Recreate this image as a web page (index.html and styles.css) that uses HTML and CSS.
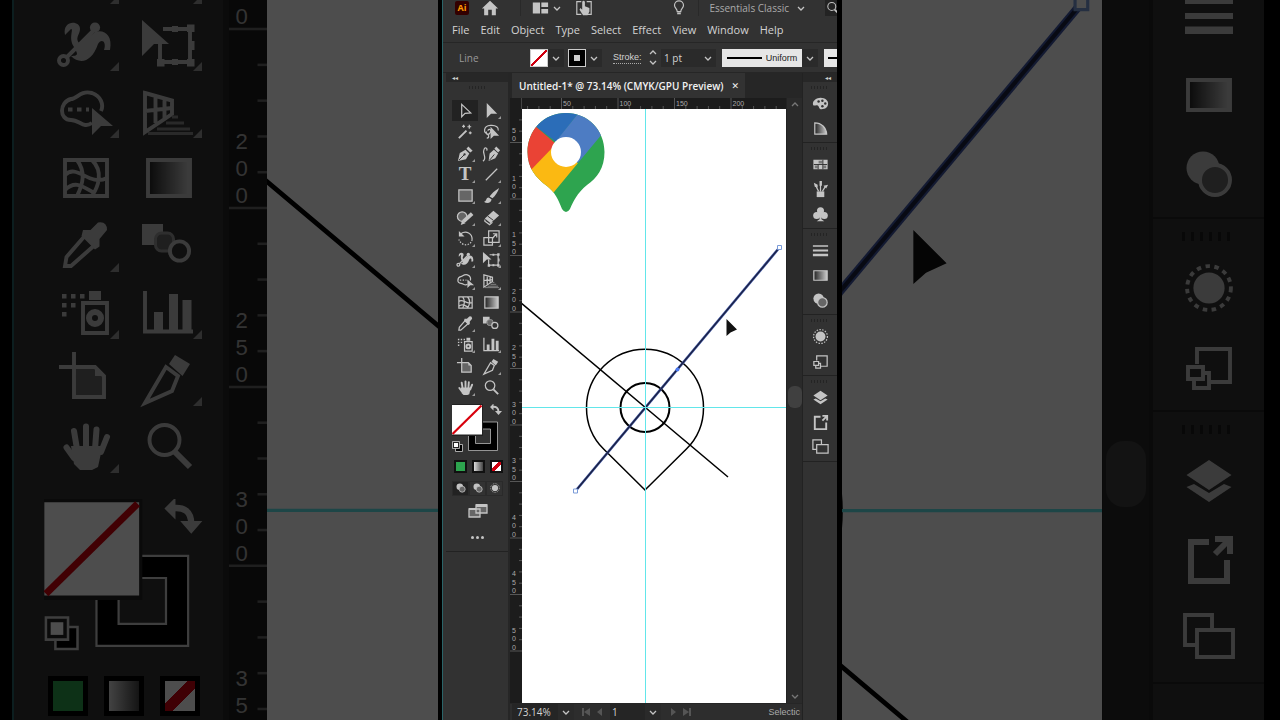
FILE: index.html
```
<!DOCTYPE html>
<html lang="en">
<head>
    <meta charset="UTF-8">
    <meta name="viewport" content="width=device-width, initial-scale=1.0">
    <title>Untitled-1</title>
    <link rel="stylesheet" href="styles.css">
</head>
<body>
    <svg class="sprite" aria-hidden="true">
        <defs>
            <linearGradient id="fade"><stop offset="0" stop-color="#222"/><stop offset="1" stop-color="#ccc"/></linearGradient>
            <clipPath id="pin-shape">
                <path d="M566 113C588 113 604.500 130 604.500 152C604.500 168 597 178 587 185C577 193 573 202 570 209Q566 215 562 209C559 201 555 192 547 186C536 178 527.500 168 527.500 152C527.500 130 544 113 566 113Z"/>
            </clipPath>
        </defs>

        <!-- tools -->
        <symbol id="select" viewBox="0 0 20 20"><path class="line" d="M6 3.500V16.500L9.500 13L15.500 12.500Z"/></symbol>
        <symbol id="direct" viewBox="0 0 20 20"><path d="M5 2V18L9.500 13.500H16Z"/></symbol>
        <symbol id="wand" viewBox="0 0 20 20"><path class="bold" d="M3 17L11 9"/><path class="line" d="M14 3V7M12 5H16M8 3V6M6.500 4.500H9.500M15 10V13M13.500 11.500H16.500"/></symbol>
        <symbol id="lasso" viewBox="0 0 20 20"><path class="line" d="M7 13C1 12 1 4 9 3.500C15 3 18 6 17 9M6 9C8 6 11 9 8 12C7 14 3 13 5 10M6 13C8 15 7 17 5 17"/><path d="M9 5V18L12.500 14.500H18Z"/></symbol>
        <symbol id="pen" viewBox="0 0 20 20"><path d="M2 18L4 9.500L10 6L14 10L10.500 16Z"/><path d="M11 5L13 2.500L17.500 7L15 9Z"/><path class="cut" d="M3 17L8.500 11.500"/><circle class="hole" cx="9" cy="11" r="1.200"/></symbol>
        <symbol id="curve" viewBox="0 0 20 20"><path d="M7 18L8 10L12.500 6L17 10L14 15Z"/><path d="M13 5L15 2.500L19 6.500L17 9Z"/><path class="cut" d="M8 17L13 11"/><path class="line" d="M1 18C6 15 0 10 2 6C3 3 6 4 5 7"/></symbol>
        <symbol id="segment" viewBox="0 0 20 20"><path class="line" d="M4 16L16 4"/></symbol>
        <symbol id="rect" viewBox="0 0 20 20"><path class="shade line" d="M3 4H17V16H3Z"/></symbol>
        <symbol id="brush" viewBox="0 0 20 20"><path d="M18 2C13 5 10 8 8 11L11 13C14 10 17 6 18 2ZM7 12C4 12 5 16 2 16.500C5 19 10 18 10 14Z"/></symbol>
        <symbol id="shaper" viewBox="0 0 20 20"><circle class="shade line" cx="6.500" cy="9" r="5"/><path class="thick" d="M8 14L17 6"/><path d="M5 18L6.500 12.500L10 16Z"/></symbol>
        <symbol id="eraser" viewBox="0 0 20 20"><path d="M3 11L12 3L18 8L9 16Z"/><path class="line" d="M3 12V14L8 17.500L11 15"/><path class="cut" d="M6 8.500L12 13"/></symbol>
        <symbol id="rotate" viewBox="0 0 20 20"><path class="line" d="M5 5C11 1 17 5 17 11"/><path class="line dots" d="M17 11C16 18 6 19 3 11"/><path d="M3 2V8H9Z"/></symbol>
        <symbol id="scale" viewBox="0 0 20 20"><path class="line" d="M7 2H18V14H7ZM2 9H11V17H2ZM11 10L15 5M11.500 5H15.500V9"/></symbol>
        <symbol id="warp" viewBox="0 0 20 20"><path d="M3 7C2 2 8 2 8 5C8 7 6 8 8 10L13 6C16 5 19 7 18 12H16C17 9 15 8 14 10C12 16 8 17 5 14C8 14 7 13 6 11C4 8 6 5 5 5Z"/><path class="line" d="M3 15L13 5"/><circle class="hole line" cx="2.500" cy="15.500" r="1.500"/><circle cx="13" cy="4.500" r="1.700"/></symbol>
        <symbol id="transform" viewBox="0 0 20 20"><path class="line" d="M8 5H17V16H7V10"/><path d="M1 2V14L5 10H10ZM16 3.500H18.500V6H16ZM16 15H18.500V17.500H16ZM6 15H8.500V17.500H6ZM11 4H13V6H11ZM11 15H13V17H11ZM17 9H18.500V12H17Z"/></symbol>
        <symbol id="builder" viewBox="0 0 20 20"><path class="line" d="M12 14C9 16 8 13 5 13C1 13 1 7 5 6C7 6 8 3 12 4C15 5 16 8 15 10"/><path class="line dots" d="M4 9.500H11"/><path d="M12 9V18L15 15H19Z"/></symbol>
        <symbol id="perspective" viewBox="0 0 20 20"><path class="line" d="M2 4L11 6.500V11L2 17ZM5.500 5V14M8.500 6V12.500M2 10L11 9"/><path class="thin" d="M11 12H13M9 14H15M6 16H17M3 17.500H18"/></symbol>
        <symbol id="mesh" viewBox="0 0 20 20"><path class="line" d="M3 4H17V16H3ZM7 4C10 8 9 12 7 16M12 4C16 8 14 13 12 16M3 9C7 5 11 13 17 10M3 14C7 10 10 14 13 15"/></symbol>
        <symbol id="gradient" viewBox="0 0 20 20"><path class="line" fill="url(#fade)" d="M3 4H17V16H3Z"/></symbol>
        <symbol id="dropper" viewBox="0 0 20 20"><path class="line" d="M10 6.500L3.500 14L3 17H5L13.500 9.500"/><path d="M9 5L11.500 5L14 2.500Q17 2 17 5L14.500 8V10.500L13 11.500L8.500 7Z"/></symbol>
        <symbol id="blend" viewBox="0 0 20 20"><path d="M1 3H8V6L5 8V10H1Z"/><rect class="shade thin-edge" x="5.500" y="6" width="6" height="6" rx="2"/><circle class="hole line" cx="13.500" cy="12" r="3.200"/></symbol>
        <symbol id="spray" viewBox="0 0 20 20"><path class="line" d="M9 7H17V17H9Z"/><circle class="bold" cx="13" cy="12" r="2"/><path d="M11 3H15V6H11ZM2 4H3.500V5.500H2ZM5 4H6.500V5.500H5ZM8 4H9.500V5.500H8ZM2 7H3.500V8.500H2ZM5 7H6.500V8.500H5ZM2 10H3.500V11.500H2Z"/></symbol>
        <symbol id="graph" viewBox="0 0 20 20"><path class="line" d="M2 3V16.500H18"/><path d="M5 10H8V16H5ZM10 4H13V16H10ZM14.500 6H17.500V16H14.500Z"/></symbol>
        <symbol id="artboard" viewBox="0 0 20 20"><path class="shade line" d="M6 6H13L16 9V16H6Z"/><path class="line" d="M1 6H6M6 1V6"/><path d="M13 6V9H16Z"/></symbol>
        <symbol id="slice" viewBox="0 0 20 20"><path class="line" d="M2 18L9 6L13 9L11 14Z"/><path d="M10 5L12 2L17 5L14.500 9Z"/></symbol>
        <symbol id="hand" viewBox="0 0 20 20"><path class="bold" stroke-linecap="round" d="M7 11L6 5M10 10V3.500M13 11L13.500 4.500M15 12L17 7M6 14L3.500 10.500"/><path d="M5 10H15.500L14 17L12 18H8L6 16Z"/></symbol>
        <symbol id="zoom" viewBox="0 0 20 20"><circle class="line" cx="8.500" cy="8" r="5"/><path class="bold" d="M12 12L17 17"/></symbol>
        <symbol id="screen" viewBox="0 0 20 20"><path class="shade line" d="M1 8H12V16H1ZM8 4H19V12H8Z"/><path d="M1 7H8V9H1ZM8 3H19V6H8Z"/></symbol>

        <!-- fill and stroke swatches -->
        <symbol id="fill-stroke" viewBox="452 404 52 50">
            <path d="M468.500 422H497.500V450.500H468.500Z" fill="#000" stroke="#ccc" stroke-width="0.700"/>
            <path d="M475.500 429H490.500V443.500H475.500Z" fill="#323232" stroke="#ccc" stroke-width="0.700"/>
            <path d="M451 404H483V436H451Z" fill="#222"/>
            <path d="M452 405H482V434.500H452Z" fill="#fff"/>
            <path d="M452.500 434L481.500 405.500" stroke="#d8000c" stroke-width="2.200"/>
            <path class="bold" d="M492 407Q498.500 406 498.500 412"/>
            <path d="M490 407L493.500 403.500V410.500ZM495 411H502L498.500 415Z"/>
            <path d="M455.500 444.500H462.500V451.500H455.500Z" fill="#000" stroke="#ccc" stroke-width="0.800"/>
            <path d="M452.500 441.500H459.500V448.500H452.500Z" fill="#222" stroke="#ccc" stroke-width="0.800"/>
            <path d="M454 443H458V447H454Z" fill="#fff"/>
        </symbol>

        <!-- panel icons -->
        <symbol id="palette" viewBox="0 0 20 20"><path d="M10 4C15 4 18 7 18 10C18 14 15 16 11 16C8 16 9 13 7 12C5 11 2 14 2 10C2 7 6 4 10 4Z"/><circle class="hole" cx="8" cy="8" r="1.300"/><circle class="hole" cx="12" cy="7" r="1.300"/><circle class="hole" cx="15" cy="10" r="1.300"/><circle class="hole" cx="12" cy="13" r="1.300"/></symbol>
        <symbol id="fan" viewBox="0 0 20 20"><path fill="url(#fade)" class="line" d="M4 4C11 4 16 9 16.500 16H4Z"/></symbol>
        <symbol id="swatches" viewBox="0 0 20 20"><path d="M2.500 5H17.500V15H2.500Z"/><path fill="#777" d="M8 6H12V9H8ZM4 11H7V14H4ZM13 11H16V14H13Z"/><path class="cut" d="M3 10H17M7.500 10V15M12.500 5V15"/></symbol>
        <symbol id="brushes" viewBox="0 0 20 20"><path d="M6 12H14V18H6Z"/><path class="line" d="M8 12L5 6M10 12V5M12 12L15 7"/><path d="M3 3L7 5L7 8L4 7ZM9 1H11.500V6H9ZM13 6L18 5L16 9Z"/></symbol>
        <symbol id="club" viewBox="0 0 20 20"><circle cx="10" cy="6" r="3.700"/><circle cx="6" cy="11" r="3.700"/><circle cx="14" cy="11" r="3.700"/><path d="M9 8H11L11 15L14 17H6L9 15Z"/></symbol>
        <symbol id="strokes" viewBox="0 0 20 20"><path d="M2 4.500H18V6H2ZM2 9H18V11H2ZM2 13.500H18V16H2Z"/></symbol>
        <symbol id="ramp" viewBox="0 0 20 20"><path fill="url(#fade)" class="line" d="M3 5H17V15H3Z"/></symbol>
        <symbol id="transparency" viewBox="0 0 20 20"><circle cx="8" cy="8" r="5.500"/><circle class="shade line" cx="12" cy="12" r="5"/></symbol>
        <symbol id="appearance" viewBox="0 0 20 20"><circle cx="10" cy="10" r="5.200"/><circle class="line dots" cx="10" cy="10" r="7.300"/></symbol>
        <symbol id="styles" viewBox="0 0 20 20"><path class="line" d="M6 9V4H17V15H10M3 10H8V14H3ZM5 14V17H10V12H8"/></symbol>
        <symbol id="layers" viewBox="0 0 20 20"><path d="M10 3L17.500 8L10 13L2.500 8ZM2.500 12L5 11L10 14L15 11L17.500 12L10 17Z"/></symbol>
        <symbol id="export" viewBox="0 0 20 20"><path class="bold" d="M10 4H4V17H16V10"/><path class="bold" d="M12 3H17V8M17 3L12 8"/></symbol>
        <symbol id="boards" viewBox="0 0 20 20"><path class="line" d="M6 12H2V2H11V7M6 7H18V16H6Z"/></symbol>

        <!-- bar icons -->
        <symbol id="home" viewBox="0 0 20 20"><path d="M10 2L19 10.500H16.500V18H12V12H8V18H3.500V10.500H1Z"/></symbol>
        <symbol id="layout" viewBox="0 0 20 20"><path d="M2 4H10V16H2ZM11.500 4H19V9H11.500ZM11.500 11H19V16H11.500Z"/></symbol>
        <symbol id="touch" viewBox="0 0 20 20"><path class="line" d="M7 3H2V17H7M13 3H18V17H13"/><path d="M8 3Q9.500 1 11 3V8L16 10V14L14 18H9L5 12L6 10L8 12Z"/></symbol>
        <symbol id="bulb" viewBox="0 0 20 20"><path class="line" d="M8 14C8 11 5 10 5 7A5 5 0 0 1 15 7C15 10 12 11 12 14Z"/><path d="M8 15H12V17H8Z"/></symbol>
        <symbol id="chevron" viewBox="0 0 8 8"><path class="line" d="M1 3L4 6L7 3"/></symbol>

        <!-- artwork, in document window coordinates -->
        <symbol id="artwork" viewBox="522 0 264 1200" overflow="visible">
            <g clip-path="url(#pin-shape)">
                <path fill="#2ea44f" d="M520 105H610V220H520Z"/>
                <path fill="#fbb912" d="M525 176L551 143L566 155L578 163L554 192L545 200Z"/>
                <path fill="#ea4335" d="M520 113L536.500 127L556 144L528 173L520 170Z"/>
                <path fill="#2b6db8" d="M536.500 127L530 110H582L577 115L556 142Z"/>
                <path fill="#4d7cc3" d="M577 115L584 105L612 122L578 163L557 140Z"/>
            </g>
            <circle cx="566" cy="152" r="15" fill="#fff"/>
            <g fill="none" stroke="#000">
                <path stroke-width="1.500" d="M645 490L603.600 449A58.500 58.500 0 1 1 686.400 449Z"/>
                <circle cx="645" cy="407.500" r="24.500" stroke-width="2"/>
                <path stroke-width="1.500" d="M520 302L728 477"/>
            </g>
            <path d="M575.500 491L779.500 247.500" stroke="#3f56a5" stroke-width="2.600"/>
            <path d="M575.500 491L779.500 247.500" stroke="#1c2140" stroke-width="1.300"/>
            <path d="M645.500 0V1200M522 407.500H786" stroke="#62e6ea"/>
            <circle cx="677.500" cy="369.500" r="2" fill="#4b78ee"/>
            <path d="M573.500 489H577.500V493H573.500ZM777.500 245.500H781.500V249.500H777.500Z" fill="#fff" stroke="#7a9bd8"/>
            <path d="M726.500 319V336L730.500 332.500L737 329.500Z" fill="#111"/>
        </symbol>
    </svg>

    <div class="stage">
        <div class="backdrop backdrop-left" aria-hidden="true">
            <div class="back-tools">
                <div class="tool-grid" id="back-grid"></div>
                <svg class="fill-stroke"><use href="#fill-stroke"/></svg>
                <div class="modes">
                    <span class="mode green"></span>
                    <span class="mode ramp"></span>
                    <span class="mode none"></span>
                </div>
            </div>
            <svg class="ruler-v" viewBox="510 246 12 228" preserveAspectRatio="xMinYMid slice"></svg>
            <svg class="canvas" viewBox="522 246 54 228" preserveAspectRatio="xMinYMid slice"><use href="#artwork" x="522" y="0" width="264" height="1200"/></svg>
        </div>

        <main class="app">
            <div class="window">
                <header class="topbar">
                    <span class="logo">Ai</span>
                    <button class="home" aria-label="Home"><svg class="icon"><use href="#home"/></svg></button>
                    <span class="divider"></span>
                    <button class="arrange" aria-label="Arrange documents"><svg class="icon"><use href="#layout"/></svg><svg class="chev"><use href="#chevron"/></svg></button>
                    <button class="touch" aria-label="Touch workspace"><svg class="icon"><use href="#touch"/></svg></button>
                    <button class="bulb" aria-label="Learn"><svg class="icon"><use href="#bulb"/></svg></button>
                    <span class="divider"></span>
                    <button class="workspace-name">Essentials Classic<svg class="chev"><use href="#chevron"/></svg></button>
                    <button class="search" aria-label="Search"><svg class="icon"><use href="#zoom"/></svg></button>
                </header>

                <nav class="menubar">
                    <button>File</button>
                    <button>Edit</button>
                    <button>Object</button>
                    <button>Type</button>
                    <button>Select</button>
                    <button>Effect</button>
                    <button>View</button>
                    <button>Window</button>
                    <button>Help</button>
                </nav>

                <div class="control-bar">
                    <span class="context">Line</span>
                    <button class="swatch no-fill" aria-label="Fill"></button>
                    <button class="drop" aria-label="Fill options"><svg class="chev"><use href="#chevron"/></svg></button>
                    <button class="swatch black-stroke" aria-label="Stroke color"></button>
                    <button class="drop" aria-label="Stroke color options"><svg class="chev"><use href="#chevron"/></svg></button>
                    <label class="stroke-label" for="weight">Stroke:</label>
                    <span class="stepper">
                        <button aria-label="Increase"><svg class="chev up"><use href="#chevron"/></svg></button>
                        <button aria-label="Decrease"><svg class="chev"><use href="#chevron"/></svg></button>
                    </span>
                    <input class="weight" id="weight" type="text" value="1 pt">
                    <button class="drop" aria-label="Stroke weights"><svg class="chev"><use href="#chevron"/></svg></button>
                    <button class="profile"><span class="profile-line"></span>Uniform</button>
                    <button class="drop" aria-label="Width profiles"><svg class="chev"><use href="#chevron"/></svg></button>
                    <button class="profile brush-def" aria-label="Brush definition"><span class="profile-line"></span></button>
                </div>

                <div class="workspace">
                    <aside class="tools">
                        <button class="collapse" aria-label="Collapse tools">◂◂</button>
                        <div class="grip"></div>
                        <div class="tool-grid" id="tool-grid"></div>
                        <svg class="fill-stroke" role="img" aria-label="Fill and stroke"><use href="#fill-stroke"/></svg>
                        <div class="modes">
                            <button class="mode green" aria-label="Color"></button>
                            <button class="mode ramp" aria-label="Gradient"></button>
                            <button class="mode none" aria-label="None"></button>
                        </div>
                        <div class="draw-modes">
                            <button class="active" aria-label="Draw normal"><svg class="icon"><use href="#transparency"/></svg></button>
                            <button aria-label="Draw behind"><svg class="icon"><use href="#transparency"/></svg></button>
                            <button aria-label="Draw inside"><svg class="icon"><use href="#appearance"/></svg></button>
                        </div>
                        <button class="screen-mode" aria-label="Screen mode"><svg class="icon"><use href="#screen"/></svg></button>
                        <button class="edit-toolbar" aria-label="Edit toolbar"><i></i><i></i><i></i></button>
                    </aside>

                    <section class="document">
                        <div class="tabs">
                            <div class="tab">Untitled-1* @ 73.14% (CMYK/GPU Preview)<button aria-label="Close">✕</button></div>
                        </div>
                        <div class="ruler-corner"></div>
                        <svg class="ruler-h" viewBox="522 98 264 11" preserveAspectRatio="xMinYMin slice"></svg>
                        <svg class="ruler-v" viewBox="510 109 12 594" preserveAspectRatio="xMinYMin slice"></svg>
                        <svg class="canvas" viewBox="522 109 264 594" preserveAspectRatio="xMinYMin slice"><use href="#artwork" x="522" y="0" width="264" height="1200"/></svg>
                        <div class="scrollbar">
                            <svg class="chev up"><use href="#chevron"/></svg>
                            <span class="thumb"></span>
                            <svg class="chev"><use href="#chevron"/></svg>
                        </div>
                        <footer class="status">
                            <input class="zoom-level" type="text" value="73.14%" aria-label="Zoom level">
                            <button class="drop" aria-label="Zoom levels"><svg class="chev"><use href="#chevron"/></svg></button>
                            <span class="nav-buttons">
                                <button aria-label="First"><svg viewBox="0 0 8 8"><path d="M0 0H2V8H0ZM8 0V8L2 4Z"/></svg></button>
                                <button aria-label="Previous"><svg viewBox="0 0 8 8"><path d="M6 0V8L1 4Z"/></svg></button>
                            </span>
                            <input class="board-number" type="text" value="1" aria-label="Artboard">
                            <button class="drop" aria-label="Artboards"><svg class="chev"><use href="#chevron"/></svg></button>
                            <span class="nav-buttons">
                                <button aria-label="Next"><svg viewBox="0 0 8 8"><path d="M2 0V8L7 4Z"/></svg></button>
                                <button aria-label="Last"><svg viewBox="0 0 8 8"><path d="M0 0V8L6 4ZM6 0H8V8H6Z"/></svg></button>
                            </span>
                            <span class="status-text">Selectic</span>
                        </footer>
                    </section>

                    <aside class="panels">
                        <button class="collapse" aria-label="Expand panels">◂◂</button>
                        <div class="panel-list" id="panel-list"></div>
                    </aside>
                </div>
            </div>
        </main>

        <div class="backdrop backdrop-right" aria-hidden="true">
            <svg class="canvas" viewBox="704 246 82 228" preserveAspectRatio="xMaxYMid slice"><use href="#artwork" x="522" y="0" width="264" height="1200"/></svg>
            <div class="scrollbar"><span class="thumb"></span></div>
            <div class="panels"><div class="panel-list" id="back-panels"></div></div>
        </div>
    </div>

    <script>
        // a trailing + marks a tool with a flyout
        const tools = [
            'select', 'direct+', 'wand', 'lasso', 'pen+', 'curve', 'type+', 'segment+',
            'rect+', 'brush+', 'shaper+', 'eraser+', 'rotate+', 'scale+', 'warp+', 'transform+',
            'builder+', 'perspective+', 'mesh', 'gradient', 'dropper+', 'blend', 'spray+', 'graph+',
            'artboard', 'slice+', 'hand+', 'zoom'
        ];
        const panels = [
            ['palette', 'fan'],
            ['swatches', 'brushes', 'club'],
            ['strokes', 'ramp', 'transparency'],
            ['appearance', 'styles'],
            ['layers', 'export', 'boards']
        ];

        function iconItem(name, tag, extra) {
            const id = name.replace('+', '');
            const flyout = name.endsWith('+') ? ' flyout' : '';
            const label = tag === 'button' ? ` aria-label="${id}"` : '';
            const icon = id === 'type' ? '<span class="type-glyph">T</span>' : `<svg class="icon"><use href="#${id}"/></svg>`;
            return `<${tag} class="${extra}${flyout}"${label}>${icon}</${tag}>`;
        }

        function panelGroups(groups, tag) {
            return groups.map(group =>
                `<div class="panel-group"><div class="grip"></div>${group.map(p => iconItem(p, tag, 'panel')).join('')}</div>`
            ).join('');
        }

        document.getElementById('tool-grid').innerHTML = tools.map(t => iconItem(t, 'button', 'tool')).join('');
        document.getElementById('back-grid').innerHTML = tools.slice(12).map(t => iconItem(t, 'span', 'tool')).join('');
        document.getElementById('panel-list').innerHTML = panelGroups(panels, 'button');
        document.getElementById('back-panels').innerHTML = panelGroups(panels.slice(2), 'span');

        const step = 56.5;

        function drawVerticalRuler(svg) {
            const top = svg.viewBox.baseVal.y;
            const bottom = top + svg.viewBox.baseVal.height;
            let html = '';
            for (let n = 1; n < 11; n++) {
                const y = 86 + n * step;
                html += `<path d="M510 ${y}H522"/>`;
                for (let i = 1; i < 5; i++) {
                    html += `<path d="M519 ${y - i * step / 5}H522"/>`;
                }
                String(n * 50).split('').reverse().forEach((digit, i) => {
                    const base = y - 1.5 - i * 8.5;
                    if (base > top && base < bottom) {
                        html += `<text x="514" y="${base}" text-anchor="middle">${digit}</text>`;
                    }
                });
            }
            svg.innerHTML = html;
        }

        function drawHorizontalRuler(svg) {
            let html = '';
            for (let n = 0; n < 5; n++) {
                const x = 505 + n * step;
                html += `<path d="M${x} 98V109"/>`;
                for (let i = 1; i < 5; i++) {
                    html += `<path d="M${x + i * step / 5} 106V109"/>`;
                }
                if (n > 0) {
                    html += `<text x="${x + 1.5}" y="106">${n * 50}</text>`;
                }
            }
            svg.innerHTML = html;
        }

        document.querySelectorAll('.ruler-v').forEach(drawVerticalRuler);
        document.querySelectorAll('.ruler-h').forEach(drawHorizontalRuler);
    </script>
</body>
</html>
```
FILE: styles.css
```
* {
    box-sizing: border-box;
}
body {
    margin: 0;
    background: #000;
    color: #d2d2d2;
    font-family: "Open Sans", "Noto Sans", sans-serif;
    font-size: 11px;
    overflow: hidden;
}
button, input {
    font: inherit;
    color: inherit;
    background: none;
    border: 0;
    padding: 0;
    margin: 0;
    min-width: 0;
}
button {
    display: flex;
    align-items: center;
    justify-content: center;
    cursor: pointer;
}
svg {
    display: block;
    flex: none;
    fill: #c4c4c4;
}
.sprite {
    position: absolute;
    width: 0;
    height: 0;
}
.line, .bold, .cut, .thin, .thick {
    stroke: #c4c4c4;
    stroke-width: 1.3;
}
.line:not(.shade):not(.hole):not([fill]), .bold, .cut, .thin {
    fill: none;
}
.bold {
    stroke-width: 2;
}
.thick {
    stroke-width: 4;
}
.thin {
    stroke: #888;
    stroke-width: 1;
}
.thin-edge {
    stroke: #999;
}
.cut {
    stroke: #323232;
    stroke-width: 1;
}
.hole {
    fill: #323232;
}
.shade {
    fill: #666;
}
.dots {
    stroke-dasharray: 1.5 1.5;
}
.type-glyph {
    color: #c4c4c4;
    font-family: "Liberation Serif", serif;
    font-size: 19px;
    font-weight: bold;
    line-height: 20px;
}
.icon {
    width: 20px;
    height: 20px;
}
.chev {
    width: 8px;
    height: 8px;
}
.up {
    transform: rotate(180deg);
}

/* page */
.stage {
    display: grid;
    grid-template-columns: minmax(0, 1fr) 404px minmax(0, 1fr);
    grid-template-rows: 100vh;
}
.app {
    min-width: 0;
    min-height: 0;
    padding: 0 5px 0 4px;
    background: #000;
}
.window {
    display: flex;
    flex-direction: column;
    height: 100%;
    overflow: hidden;
    background: #323232;
    border-left: 1px solid #2a6468;
}

/* top bars */
.topbar {
    display: flex;
    align-items: center;
    flex: none;
    height: 16px;
    padding-left: 12px;
}
.logo {
    width: 14px;
    height: 14px;
    background: #330000;
    border-radius: 2px;
    color: #ff9a00;
    font-size: 9px;
    font-weight: bold;
    line-height: 14px;
    text-align: center;
}
.topbar .icon {
    width: 18px;
    height: 18px;
}
.home {
    margin-left: 12px;
}
.divider {
    width: 1px;
    height: 16px;
    margin: 0 10px;
    background: #292929;
}
.home + .divider {
    margin-left: 21px;
}
.arrange {
    gap: 4px;
}
.touch {
    margin: 0 auto 0 14px;
}
.workspace-name {
    gap: 8px;
    color: #aaa;
    font-size: 10px;
    white-space: nowrap;
}
.search {
    flex: none;
    justify-content: flex-start;
    width: 12px;
    height: 16px;
    margin-left: 20px;
    overflow: hidden;
    background: #232323;
}
.search .icon {
    width: 16px;
}
.menubar {
    display: flex;
    align-items: center;
    flex: none;
    gap: 11px;
    height: 27px;
    padding-left: 9px;
    border-bottom: 1px solid #262626;
}
.control-bar {
    display: flex;
    align-items: center;
    flex: none;
    height: 30px;
    padding-left: 16px;
    border-bottom: 1px solid #262626;
}
.context {
    flex: none;
    width: 71px;
    color: #999;
    font-size: 10px;
}
.swatch {
    flex: none;
    width: 18px;
    height: 18px;
    border: 1px solid #ccc;
}
.no-fill {
    background: linear-gradient(135deg, #fff 46%, #d00010 46%, #d00010 54%, #fff 54%);
}
.black-stroke {
    background: linear-gradient(#ccc, #ccc) center / 6px 6px no-repeat #000;
}
.drop {
    flex: none;
    width: 16px;
    height: 18px;
    background: #2a2a2a;
}
.drop + .swatch {
    margin-left: 4px;
}
.stroke-label {
    flex: none;
    width: 28px;
    margin-left: 11px;
    border-bottom: 1px dotted #aaa;
    font-family: "Liberation Sans", sans-serif;
    font-size: 9px;
    line-height: 12px;
    white-space: nowrap;
}
.stepper {
    display: flex;
    flex-direction: column;
    flex: none;
    gap: 1px;
    margin-left: 8px;
}
.weight {
    flex: none;
    width: 39px;
    height: 18px;
    margin-left: 4px;
    padding-left: 3px;
    background: #2a2a2a;
    font-size: 10px;
}
.profile {
    flex: none;
    gap: 4px;
    width: 80px;
    height: 18px;
    margin-left: 6px;
    background: #e6e6e6;
    color: #222;
    font-family: "Liberation Sans", sans-serif;
    font-size: 9px;
}
.profile-line {
    flex: none;
    width: 35px;
    height: 2px;
    background: #000;
}
.brush-def {
    justify-content: flex-start;
    width: 50px;
    padding-left: 4px;
}

/* workspace */
.workspace {
    display: flex;
    flex: 1;
    min-height: 0;
}
.collapse {
    flex: none;
    height: 9px;
    background: #272727;
    font-family: "DejaVu Sans", sans-serif;
    font-size: 6px;
    line-height: 9px;
}
.grip {
    width: 18px;
    height: 3px;
    background: repeating-linear-gradient(90deg, #242424 0 1px, #323232 1px 3px);
}
.tools {
    display: flex;
    flex-direction: column;
    flex: none;
    width: 67px;
    padding-left: 3px;
    border-right: 2px solid #262626;
}
.tools > .collapse {
    justify-content: flex-start;
    padding-left: 6px;
}
.tools > .grip {
    margin: 4px auto 11px 23px;
}
.tool-grid {
    display: grid;
    grid-template-columns: 26px 26px;
    grid-template-rows: repeat(14, 1fr);
    flex: none;
    height: 298px;
    margin-left: 6px;
}
.tool {
    display: flex;
    align-items: center;
    justify-content: center;
    position: relative;
}
.tool .icon {
    width: 19px;
    height: 19px;
}
button.tool:first-child {
    background: #222;
}
.flyout::after {
    content: "";
    position: absolute;
    right: 3px;
    bottom: 2px;
    border-left: 3px solid transparent;
    border-bottom: 3px solid #999;
}
.fill-stroke {
    width: 52px;
    height: 50px;
    margin: 6px 0 0 6px;
}
.modes, .draw-modes {
    display: flex;
    flex: none;
    gap: 5px;
    height: 18px;
    align-items: center;
    margin: 3px 0 0 8px;
}
.mode {
    width: 13px;
    height: 13px;
    border: 2px solid #111;
}
.green {
    background: #2da44e;
}
.ramp {
    background: linear-gradient(90deg, #ddd, #444);
}
.none {
    background: linear-gradient(135deg, #fff 38%, #d00010 38%, #d00010 62%, #fff 62%);
}
.draw-modes {
    gap: 0;
    height: 16px;
    margin: 5px 0 0 6px;
}
.draw-modes button {
    width: 17px;
    height: 15px;
    border: 1px solid #2a2a2a;
}
.draw-modes .active {
    background: #222;
}
.draw-modes .icon {
    width: 12px;
    height: 12px;
}
.screen-mode {
    margin: 4px 0 0 6px;
    width: 52px;
    height: 22px;
}
.edit-toolbar {
    gap: 2px;
    height: 28px;
    margin-top: 2px;
    border-bottom: 1px solid #222;
}
.edit-toolbar i {
    width: 3px;
    height: 3px;
    border-radius: 50%;
    background: #c4c4c4;
}
.document {
    display: grid;
    grid-template-columns: 12px 1fr 16px;
    grid-template-rows: 25px 11px 1fr 17px;
    flex: 1;
    min-width: 0;
    background: #2b2b2b;
}
.tabs {
    grid-column: 1 / -1;
    display: flex;
    padding-left: 2px;
    background: #262626;
}
.tab {
    display: flex;
    align-items: center;
    gap: 8px;
    padding: 0 6px 0 7px;
    background: #323232;
    color: #f2f2f2;
    font-size: 10px;
    font-weight: 600;
    white-space: nowrap;
}
.tab button {
    font-family: "DejaVu Sans", sans-serif;
    font-size: 9px;
}
.ruler-corner, .ruler-h, .ruler-v {
    background: #1c1c1c;
}
.ruler-corner {
    border-right: 1px solid #444;
}
.ruler-h {
    width: 100%;
    height: 11px;
}
.ruler-v {
    width: 12px;
    height: 100%;
}
.ruler-h path, .ruler-v path {
    stroke: #666;
    stroke-width: 0.8;
}
.ruler-h text, .ruler-v text {
    fill: #aaa;
    font-family: "Liberation Sans", sans-serif;
    font-size: 7px;
}
.canvas {
    width: 100%;
    height: 100%;
    min-height: 0;
    background: #fff;
}
.scrollbar {
    display: flex;
    flex-direction: column;
    align-items: center;
    justify-content: space-between;
    background: #2a2a2a;
    border-left: 1px solid #222;
}
.document .scrollbar {
    grid-row: 2 / 4;
    grid-column: 3;
    padding: 3px 0;
}
.scrollbar .chev {
    opacity: 0.5;
}
.thumb {
    width: 14px;
    height: 22px;
    border-radius: 6px;
    background: #404040;
}
.document .thumb {
    margin-bottom: 8px;
}
.status {
    grid-column: 1 / -1;
    display: flex;
    align-items: center;
    overflow: hidden;
    padding-left: 2px;
    background: #2d2d2d;
    border-top: 1px solid #262626;
    font-size: 10px;
}
.status input {
    height: 16px;
    background: #252525;
}
.zoom-level {
    width: 46px;
    padding-left: 5px;
}
.nav-buttons {
    display: flex;
    gap: 6px;
    margin-left: 8px;
}
.nav-buttons svg {
    width: 8px;
    height: 8px;
    fill: #555;
}
.board-number {
    width: 35px;
    margin-left: 6px;
    padding-left: 2px;
}
.status-text {
    margin: 0 2px 0 auto;
    color: #aaa;
    font-family: "Liberation Sans", sans-serif;
    font-size: 9px;
}

/* panel dock */
.panels {
    flex: none;
    width: 35px;
    border-left: 1px solid #222;
    background: #323232;
}
.panels > .collapse {
    width: 100%;
    justify-content: flex-end;
    padding-right: 6px;
}
.panel-group {
    display: flex;
    flex-direction: column;
    align-items: center;
    padding-bottom: 1px;
    border-bottom: 1px solid #222;
}
.panel-group .grip {
    margin: 4px 0 2px;
}
.panel {
    display: flex;
    align-items: center;
    justify-content: center;
    width: 30px;
    height: 25px;
}
.panel .icon {
    width: 19px;
    height: 19px;
}

/* enlarged, dimmed copy on both sides */
.backdrop {
    display: flex;
    min-width: 0;
    min-height: 0;
    overflow: hidden;
    opacity: 0.3;
}
.backdrop .canvas {
    flex: 1;
    width: auto;
    min-width: 0;
}
.backdrop-left {
    padding-left: 12px;
}
.back-tools {
    flex: none;
    width: 217px;
    background: #323232;
    border-left: 2px solid #2a6468;
    border-right: 6px solid #262626;
}
.backdrop .tool-grid {
    grid-template-columns: 83px 83px;
    grid-template-rows: repeat(8, 67px);
    height: 536px;
    margin: -57px 0 0 30px;
}
.backdrop .tool .icon {
    width: 60px;
    height: 60px;
}
.backdrop .flyout::after {
    right: 8px;
    bottom: 6px;
    border-left-width: 9px;
    border-bottom-width: 9px;
}
.backdrop .fill-stroke {
    width: 165px;
    height: 158px;
    margin: 20px 0 0 30px;
}
.backdrop .modes {
    gap: 16px;
    height: 57px;
    margin: 10px 0 0 34px;
}
.backdrop .mode {
    width: 40px;
    height: 40px;
    border: 5px solid #000;
}
.backdrop .ruler-v {
    width: 38px;
}
.backdrop .scrollbar {
    flex: none;
    width: 47px;
    justify-content: center;
}
.backdrop .thumb {
    width: 40px;
    height: 66px;
    margin-top: 228px;
    border-radius: 18px;
}
.backdrop .panels {
    width: 115px;
    margin-right: 16px;
    border-left-width: 4px;
}
.backdrop .panel-list {
    margin-top: -53px;
}
.backdrop .panel-group {
    padding-bottom: 4px;
    border-bottom-width: 2px;
}
.backdrop .grip {
    width: 54px;
    height: 9px;
    margin: 13px 0 7px;
    background: repeating-linear-gradient(90deg, #1c1c1c 0 3px, #323232 3px 9px);
}
.backdrop .panel {
    width: 95px;
    height: 79px;
}
.backdrop .panel .icon {
    width: 60px;
    height: 60px;
}
```
